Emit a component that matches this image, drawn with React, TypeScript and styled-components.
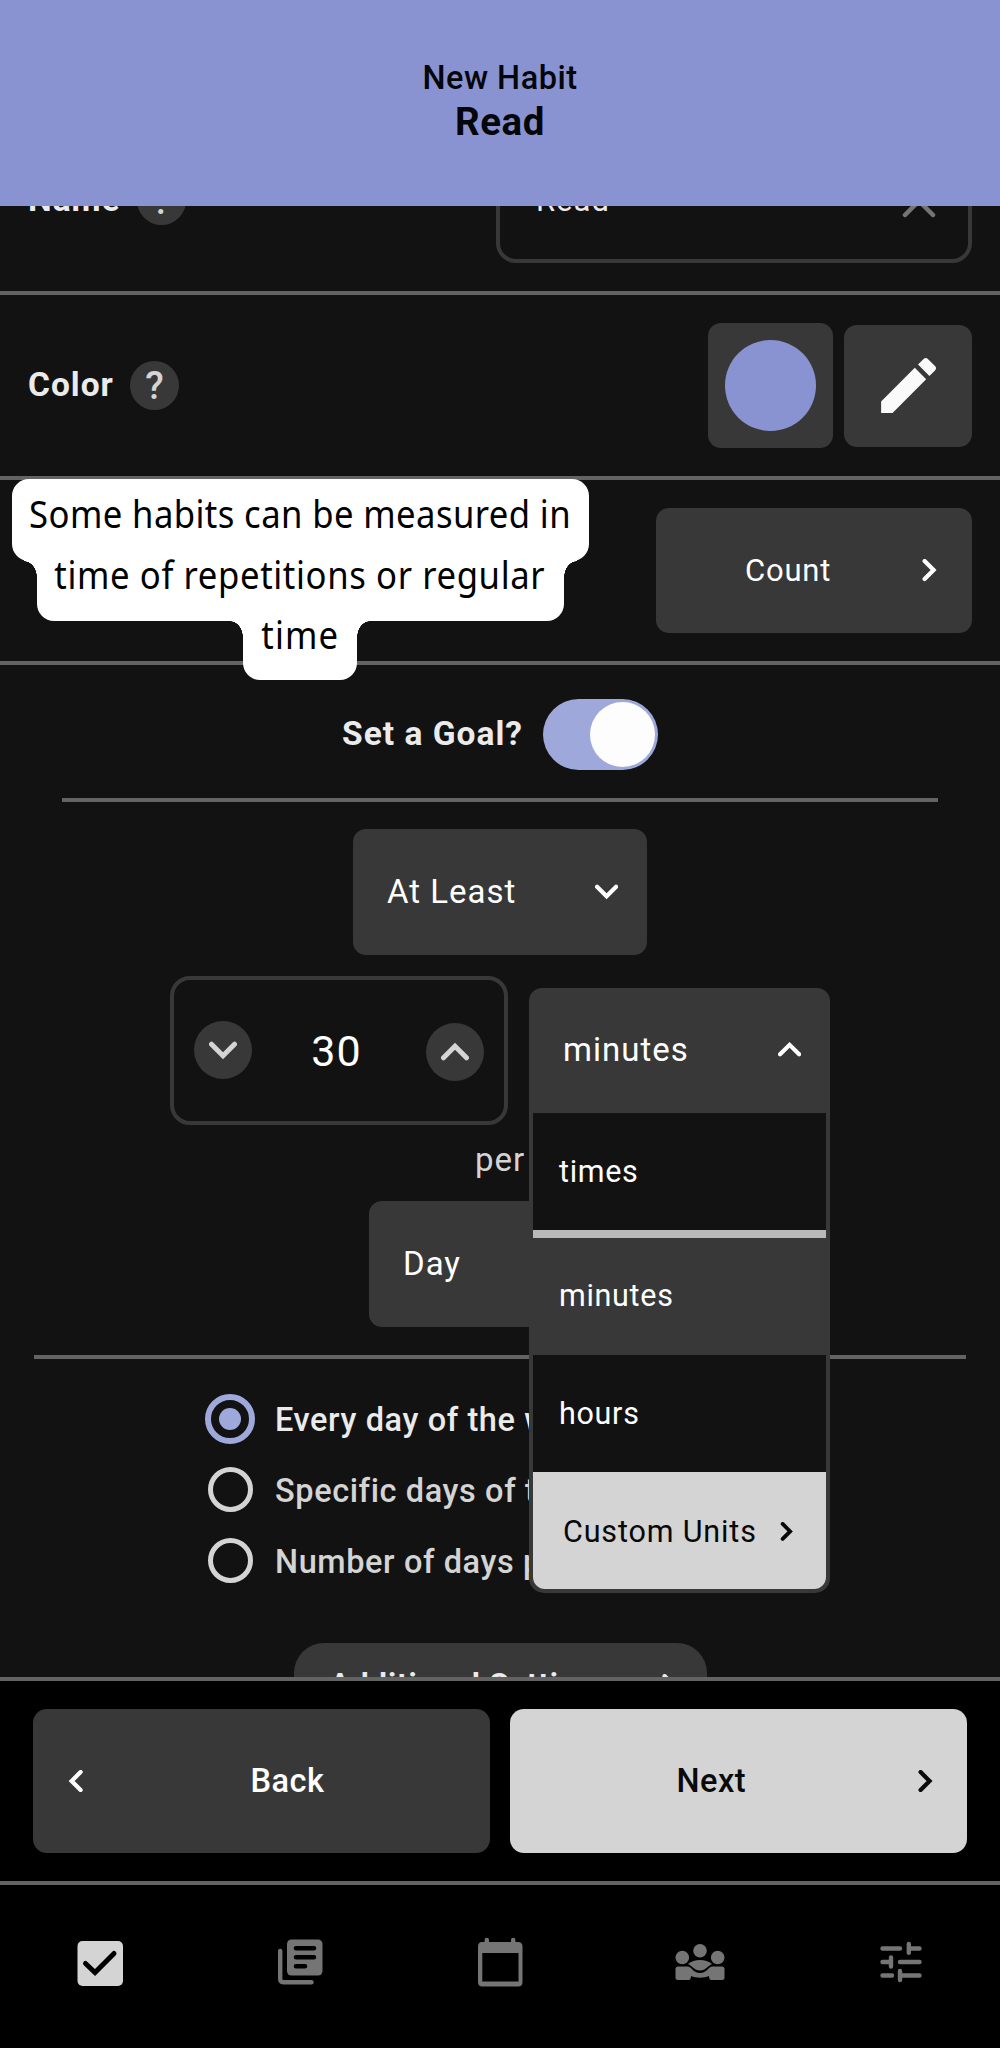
import React from "react";
import styled, { createGlobalStyle, css } from "styled-components";

const c = {
  accent: "#8a93d1",
  accentLight: "#9fa8da",
  bg: "#121212",
  surface: "#383838",
  line: "#636363",
  light: "#d4d4d4",
  text: "#ebebeb",
  icon: "#757575",
};

const GlobalStyle = createGlobalStyle`
  * { box-sizing: border-box; }
  body { margin: 0; background: #000; font-family: Roboto, "Liberation Sans", sans-serif; }
`;

const Screen = styled.div`
  width: 1000px;
  height: 2048px;
  display: flex;
  flex-direction: column;
  overflow: hidden;
  background: #000;
  color: ${c.text};
`;

const Header = styled.header`
  height: 206px;
  flex: none;
  display: flex;
  flex-direction: column;
  align-items: center;
  padding-top: 56px;
  background: ${c.accent};
  color: #05060a;
`;

const HeaderCaption = styled.div`
  font-size: 32.5px;
  line-height: 44px;
  font-weight: 500;
  letter-spacing: 0.5px;
`;

const HeaderTitle = styled.h1`
  margin: 0;
  font-size: 38.5px;
  line-height: 44px;
  font-weight: 700;
  letter-spacing: 0.6px;
`;

const Scroll = styled.main`
  height: 1471px;
  flex: none;
  overflow: hidden;
  background: ${c.bg};
`;

const Row = styled.section<{ $scrolled?: boolean }>`
  position: relative;
  height: 185px;
  padding: 0 28px;
  display: flex;
  align-items: center;
  border-bottom: 4px solid ${c.line};
  ${(p) => p.$scrolled && css`margin-top: -96px;`}
`;

const RowLabel = styled.span`
  padding-bottom: 2px;
  font-size: 33.5px;
  line-height: 40px;
  font-weight: 700;
  letter-spacing: 1px;
`;

const Help = styled.button`
  width: 49px;
  height: 49px;
  margin-left: 16px;
  padding: 0;
  border: 0;
  border-radius: 50%;
  background: ${c.surface};
  color: ${c.light};
  font: 500 38px/50px Roboto, sans-serif;
`;

const Push = styled.div`
  margin-left: auto;
  display: flex;
  align-items: center;
  gap: 11px;
`;

const NameField = styled.div`
  width: 476px;
  height: 124px;
  padding: 0 32px 0 36px;
  display: flex;
  align-items: center;
  justify-content: space-between;
  border: 4px solid ${c.surface};
  border-radius: 20px;
  font-size: 31px;
  letter-spacing: 1px;
`;

const Tile = styled.button<{ $w: number; $h: number }>`
  width: ${(p) => p.$w}px;
  height: ${(p) => p.$h}px;
  padding: 0;
  display: flex;
  align-items: center;
  justify-content: center;
  border: 0;
  border-radius: 13px;
  background: ${c.surface};
`;

const Swatch = styled.span`
  width: 91px;
  height: 91px;
  border-radius: 50%;
  background: ${c.accent};
`;

const CountButton = styled.button`
  width: 316px;
  height: 125px;
  padding: 0 32px 0 89px;
  display: flex;
  align-items: center;
  justify-content: space-between;
  border: 0;
  border-radius: 13px;
  background: ${c.surface};
  color: #fff;
  font: 400 31px/40px Roboto, sans-serif;
  letter-spacing: 0.8px;
`;

/* Caption bubble: one white block per line, joined by concave corners. */
const Bubble = styled.div`
  position: absolute;
  z-index: 3;
  left: 11.5px;
  top: -1px;
  width: 577px;
  display: flex;
  flex-direction: column;
  align-items: center;
  color: #000;
  font-family: "Noto Sans", "Open Sans", sans-serif;
  font-size: 38.5px;
`;

const BubbleText = styled.span<{ $spacing: number }>`
  display: inline-block;
  transform: scaleX(0.9);
  letter-spacing: ${(p) => p.$spacing}px;
`;

const BubbleLine = styled.div<{ $w: number; $h: number; $first?: boolean }>`
  position: relative;
  width: ${(p) => p.$w}px;
  height: ${(p) => p.$h}px;
  display: flex;
  justify-content: center;
  background: #fff;
  border-radius: ${(p) => (p.$first ? "17px" : "0 0 17px 17px")};
  line-height: ${(p) => (p.$first ? 68 : 29)}px;
  margin-top: ${(p) => (p.$first ? 0 : -1)}px;
  white-space: nowrap;
  ${(p) =>
    !p.$first &&
    css`
      &::before,
      &::after {
        content: "";
        position: absolute;
        top: 0;
        width: 13px;
        height: 17px;
      }
      &::before {
        left: -13px;
        background: radial-gradient(ellipse 13px 16px at 0 100%, transparent 97%, #fff 100%);
      }
      &::after {
        right: -13px;
        background: radial-gradient(ellipse 13px 16px at 100% 100%, transparent 97%, #fff 100%);
      }
    `}
`;

const Goal = styled.section`
  display: flex;
  flex-direction: column;
  align-items: center;
`;

const GoalToggle = styled.label`
  height: 71px;
  margin-top: 34px;
  display: flex;
  align-items: center;
  gap: 20px;
`;

const Toggle = styled.span`
  width: 115px;
  height: 71px;
  padding: 3px;
  display: flex;
  justify-content: flex-end;
  border-radius: 36px;
  background: ${c.accentLight};

  &::after {
    content: "";
    width: 65px;
    height: 65px;
    border-radius: 50%;
    background: #fdfdfd;
  }
`;

const Rule = styled.hr<{ $w: number; $top: number }>`
  width: ${(p) => p.$w}px;
  height: 4px;
  margin: ${(p) => p.$top}px 0 0;
  border: 0;
  background: ${c.line};
`;

const Select = styled.button<{ $w: number; $top?: number }>`
  width: ${(p) => p.$w}px;
  height: 126px;
  margin: ${(p) => p.$top ?? 0}px 0 0;
  padding: 0 29px 0 34px;
  display: flex;
  align-items: center;
  justify-content: space-between;
  border: 0;
  border-radius: 13px;
  background: ${c.surface};
  color: #fff;
  font: 400 33px/40px Roboto, sans-serif;
  letter-spacing: 1px;
`;

const AmountRow = styled.div`
  margin-top: 21px;
  display: flex;
  align-items: center;
  gap: 21px;
`;

const Stepper = styled.div`
  width: 338px;
  height: 149px;
  padding: 0 20px;
  display: flex;
  align-items: center;
  justify-content: space-between;
  border: 4px solid ${c.surface};
  border-radius: 20px;
  color: #fff;
`;

const Amount = styled.span`
  padding-right: 5px;
  font-size: 43px;
  letter-spacing: 1px;
`;

const StepButton = styled.button<{ $shift: number }>`
  width: 58px;
  height: 58px;
  padding: 0;
  margin-top: ${(p) => p.$shift}px;
  display: flex;
  align-items: center;
  justify-content: center;
  border: 0;
  border-radius: 50%;
  background: ${c.surface};
`;

const Units = styled.div`
  position: relative;
  width: 301px;
`;

const UnitsHead = styled(Select)`
  padding-bottom: 2px;
  border-radius: 13px 13px 0 0;
`;

const Menu = styled.div`
  position: absolute;
  z-index: 2;
  top: 125.5px;
  left: 0;
  width: 301px;
  padding: 0 4px 4px;
  display: flex;
  flex-direction: column;
  border-radius: 0 0 15px 15px;
  background: ${c.surface};
`;

const MenuItem = styled.div<{ $selected?: boolean; $custom?: boolean }>`
  height: ${(p) => (p.$selected ? 125 : 117)}px;
  padding: 0 38px 0 26px;
  display: flex;
  align-items: center;
  justify-content: space-between;
  background: ${(p) => (p.$selected ? c.surface : c.bg)};
  color: #fff;
  font-size: 30.5px;
  line-height: 40px;
  letter-spacing: 0.7px;
  ${(p) =>
    p.$selected &&
    css`
      padding-bottom: 2px;
      border-top: 8px solid #b9b9b9;
    `}
  ${(p) =>
    p.$custom &&
    css`
      padding: 2px 30px 0 30px;
      background: ${c.light};
      color: #080808;
      letter-spacing: 0.85px;
      border-radius: 0 0 12px 12px;
    `}
`;

const Per = styled.div`
  margin-top: 15px;
  font-size: 33px;
  line-height: 40px;
  letter-spacing: 1px;
  color: ${c.light};
`;

const Frequency = styled.div`
  width: 590px;
  margin-top: 24px;
`;

const Option = styled.label<{ $on?: boolean }>`
  height: 71px;
  display: flex;
  align-items: center;
  color: ${(p) => (p.$on ? c.text : c.light)};
  font-size: 32.5px;
  line-height: 40px;
  font-weight: 500;
  letter-spacing: 0.6px;
  white-space: nowrap;
`;

const OptionText = styled.span`
  padding-top: 2px;
`;

const Radio = styled.span<{ $on?: boolean }>`
  width: ${(p) => (p.$on ? 50 : 45)}px;
  height: ${(p) => (p.$on ? 50 : 45)}px;
  margin: ${(p) => (p.$on ? "0 20px 0 0" : "0 22.5px 0 2.5px")};
  display: grid;
  place-items: center;
  border: ${(p) => (p.$on ? `6px solid ${c.accentLight}` : `5px solid ${c.light}`)};
  border-radius: 50%;

  &::after {
    content: "";
    width: 22px;
    height: 22px;
    border-radius: 50%;
    background: ${(p) => (p.$on ? c.accentLight : "transparent")};
  }
`;

const Additional = styled.button`
  width: 413px;
  height: 84px;
  margin: 47px 0 0;
  padding: 0 26px 0 36px;
  display: flex;
  align-items: center;
  justify-content: space-between;
  border: 0;
  border-radius: 30px;
  background: ${c.surface};
  color: ${c.text};
  font: 700 31px/40px Roboto, sans-serif;
  letter-spacing: 0.9px;
`;

const Actions = styled.footer`
  height: 204px;
  flex: none;
  padding: 28px 33px 0;
  display: flex;
  gap: 20px;
  border-top: 4px solid ${c.line};
`;

const Action = styled.button<{ $primary?: boolean }>`
  flex: 1;
  height: 144px;
  padding: ${(p) => (p.$primary ? "0 31px 0 167px" : "0 165px 0 32px")};
  display: flex;
  align-items: center;
  justify-content: space-between;
  border: 0;
  border-radius: 14px;
  background: ${(p) => (p.$primary ? c.light : c.surface)};
  color: ${(p) => (p.$primary ? "#0a0a0a" : "#fff")};
  font: 500 32.5px/40px Roboto, sans-serif;
  letter-spacing: 0.5px;
`;

const Nav = styled.nav`
  flex: 1;
  display: grid;
  grid-template-columns: repeat(5, 1fr);
  justify-items: center;
  align-items: start;
  padding-top: 46px;
  border-top: 4px solid ${c.line};
`;

type Dir = "up" | "down" | "left" | "right";
const turn: Record<Dir, number> = { right: 0, down: 90, left: 180, up: 270 };

function Chevron({ dir, size = 10, stroke = 4, color = "#fff" }: { dir: Dir; size?: number; stroke?: number; color?: string }) {
  const h = size / 2;
  const edge = size + stroke / 2;
  return (
    <svg width={edge * 2} height={edge * 2} viewBox={`${-edge} ${-edge} ${edge * 2} ${edge * 2}`}>
      <path
        d={`M${-h} ${-size}L${h} 0L${-h} ${size}`}
        transform={`rotate(${turn[dir]})`}
        fill="none"
        stroke={color}
        strokeWidth={stroke}
        strokeLinecap="round"
      />
    </svg>
  );
}

const NavIcon = ({ children }: { children: React.ReactNode }) => (
  <svg width="64" height="64" viewBox="0 0 64 64" fill={c.icon}>
    {children}
  </svg>
);

export default function App() {
  return (
    <Screen>
      <GlobalStyle />
      <Header>
        <HeaderCaption>New Habit</HeaderCaption>
        <HeaderTitle>Read</HeaderTitle>
      </Header>

      <Scroll>
        <Row $scrolled>
          <RowLabel>Name</RowLabel>
          <Help>?</Help>
          <Push>
            <NameField>
              <span>Read</span>
              <svg width="34" height="34" viewBox="0 0 34 34" stroke={c.icon} strokeWidth="4.5" strokeLinecap="round">
                <path d="M3 3L31 31M31 3L3 31" />
              </svg>
            </NameField>
          </Push>
        </Row>

        <Row>
          <RowLabel>Color</RowLabel>
          <Help>?</Help>
          <Push>
            <Tile $w={125} $h={125}>
              <Swatch />
            </Tile>
            <Tile $w={128} $h={122}>
              <svg width="73" height="73" viewBox="0 0 24 24" fill="#fafafa">
                <path d="M3 17.25V21h3.75L17.81 9.94l-3.75-3.75L3 17.25zM20.71 7.04a1 1 0 0 0 0-1.41l-2.34-2.34a1 1 0 0 0-1.41 0l-1.83 1.83 3.75 3.75 1.83-1.83z" />
              </svg>
            </Tile>
          </Push>
        </Row>

        <Row>
          <Bubble>
            <BubbleLine $first $w={577} $h={82}>
              <BubbleText $spacing={0.45}>Some habits can be measured in</BubbleText>
            </BubbleLine>
            <BubbleLine $w={527} $h={61}>
              <BubbleText $spacing={0.7}>time of repetitions or regular</BubbleText>
            </BubbleLine>
            <BubbleLine $w={114} $h={60}>
              <BubbleText $spacing={1.2}>time</BubbleText>
            </BubbleLine>
          </Bubble>
          <Push>
            <CountButton>
              Count
              <Chevron dir="right" size={9} stroke={4.2} />
            </CountButton>
          </Push>
        </Row>

        <Goal>
          <GoalToggle>
            <RowLabel>Set a Goal?</RowLabel>
            <Toggle />
          </GoalToggle>
          <Rule $w={876} $top={28} />
          <Select $w={294} $top={27}>
            At Least
            <Chevron dir="down" size={9.5} stroke={4.2} />
          </Select>
          <AmountRow>
            <Stepper>
              <StepButton $shift={-1}>
                <Chevron dir="down" size={11.5} stroke={5} color={c.light} />
              </StepButton>
              <Amount>30</Amount>
              <StepButton $shift={3}>
                <Chevron dir="up" size={11.5} stroke={5} color={c.light} />
              </StepButton>
            </Stepper>
            <Units>
              <UnitsHead $w={301}>
                minutes
                <Chevron dir="up" size={9.5} stroke={4.2} />
              </UnitsHead>
              <Menu>
                <MenuItem>times</MenuItem>
                <MenuItem $selected>minutes</MenuItem>
                <MenuItem>hours</MenuItem>
                <MenuItem $custom>
                  Custom Units
                  <Chevron dir="right" size={7.5} stroke={3.8} color="#080808" />
                </MenuItem>
              </Menu>
            </Units>
          </AmountRow>
          <Per>per</Per>
          <Select $w={262} $top={21}>
            Day
            <Chevron dir="down" size={9.5} stroke={4.2} />
          </Select>
          <Rule $w={932} $top={28} />
          <Frequency>
            <Option $on>
              <Radio $on />
              <OptionText>Every day of the week</OptionText>
            </Option>
            <Option>
              <Radio />
              <OptionText>Specific days of the week</OptionText>
            </Option>
            <Option>
              <Radio />
              <OptionText>Number of days per week</OptionText>
            </Option>
          </Frequency>
          <Additional>
            Additional Settings
            <Chevron dir="right" size={9} stroke={4.2} color={c.text} />
          </Additional>
        </Goal>
      </Scroll>

      <Actions>
        <Action>
          <Chevron dir="left" size={9} stroke={4.2} />
          Back
        </Action>
        <Action $primary>
          Next
          <Chevron dir="right" size={9} stroke={4.2} color="#0a0a0a" />
        </Action>
      </Actions>

      <Nav>
        <NavIcon>
          <rect x="9.5" y="10" width="45.5" height="45" rx="5" fill={c.light} />
          <path d="M17.5 32.5L27 41.5L46 22.5" fill="none" stroke="#000" strokeWidth="5" strokeLinecap="round" />
        </NavIcon>
        <NavIcon>
          <rect x="19" y="8.5" width="35.5" height="36" rx="4.5" />
          <path d="M28 17.3H46M28 26.3H46M28 35.3H37" stroke="#000" strokeWidth="4.6" strokeLinecap="round" />
          <path d="M12.2 20V48Q12.2 51.2 15.4 51.2H43.5" fill="none" stroke={c.icon} strokeWidth="4.4" strokeLinecap="round" />
        </NavIcon>
        <NavIcon>
          <path d="M14 11H50Q54.5 11 54.5 15.5V51Q54.5 55.5 50 55.5H14.5Q10 55.5 10 51V15.5Q10 11 14 11ZM14.3 22V50.5H50.5V22Z" fillRule="evenodd" />
          <path d="M18.8 9V14M45.2 9V14" stroke={c.icon} strokeWidth="4.4" strokeLinecap="round" />
        </NavIcon>
        <NavIcon>
          <circle cx="14.3" cy="26.5" r="6.8" />
          <circle cx="32" cy="19.8" r="6.8" />
          <circle cx="49.7" cy="26.5" r="6.8" />
          <path d="M20 33C26 27.6 38 27.6 44 33C40 34.5 38 39.5 32 39.5S24 34.5 20 33Z" />
          <path d="M10 35.5H19.5C23.5 35.5 25 42 32 42S40.5 35.5 44.5 35.5H54Q56.5 35.5 56.5 38V46.5Q56.5 49 54 49H43.5Q41 49 41 45C36 47.3 28 47.3 23 45Q23 49 20.5 49H10Q7.5 49 7.5 46.5V38Q7.5 35.5 10 35.5Z" />
        </NavIcon>
        <NavIcon>
          <g fill="none" stroke={c.icon} strokeWidth="4.4" strokeLinecap="round">
            <path d="M14.5 17.5H32M42 17.5H51.5M40.8 13V21.8" />
            <path d="M14.5 31H22.5M23 26.5V35.5M32 31H51.5" />
            <path d="M14.5 44.5H24M32 40V49M33 44.5H51.5" />
          </g>
        </NavIcon>
      </Nav>
    </Screen>
  );
}
